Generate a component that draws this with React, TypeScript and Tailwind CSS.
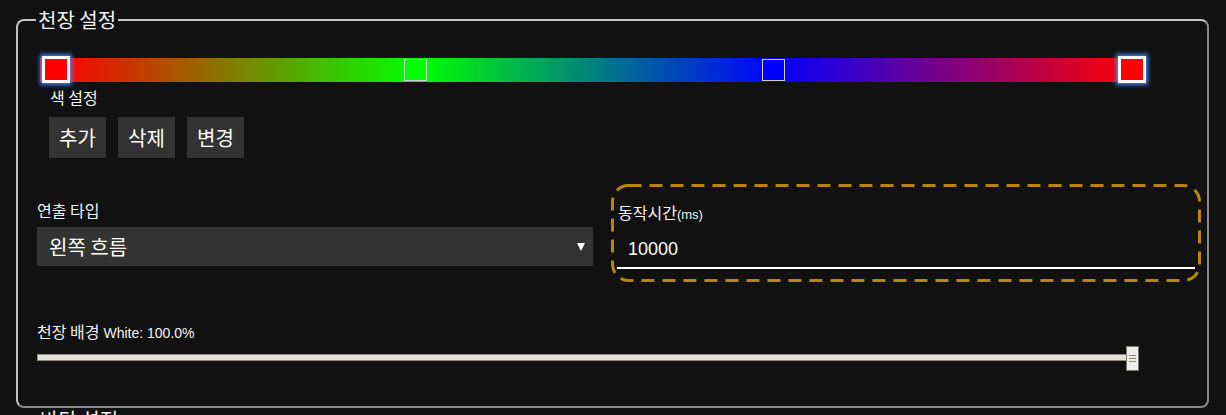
import React from "react";

const gradient =
	"linear-gradient(to right, #ff0000 1.4%, #00ff00 34%, #0000ff 66.3%, #ff0000 98.7%)";

function ColorBar() {
	return (
		<div className="relative ml-[4px] mt-[25px] h-[27px] w-[1106px] pt-[2px]">
			<div className="h-[24px] w-full" style={{ background: gradient }} />
			{/* stop handles */}
			<div className="absolute left-[2px] top-0 h-[27px] w-[28px] border-[3px] border-white bg-[#ff0000] shadow-[0_0_4px_2px_rgba(70,140,255,0.9)]" />
			<div className="absolute left-[364px] top-[3px] h-[22px] w-[23px] border-[1.5px] border-[#d0d0d0] bg-[#00ff00]" />
			<div className="absolute left-[722px] top-[3px] h-[22px] w-[23px] border-[1.5px] border-[#d0d0d0] bg-[#0000ff]" />
			<div className="absolute right-0 top-0 h-[27px] w-[28px] border-[3px] border-white bg-[#ff0000] shadow-[0_0_4px_2px_rgba(70,140,255,0.9)]" />
		</div>
	);
}

function Slider() {
	return (
		<div className="relative ml-[1px] mt-[5px] h-[25px] w-[1102px] pt-[8px]">
			<div className="h-[7px] w-[1096px] border border-[#8c8880] bg-[#e6e2da]" />
			<div className="absolute right-0 top-0 flex h-[25px] w-[13px] flex-col items-center justify-center gap-[2px] border border-[#7a7670] bg-[#efede8]">
				<span className="h-px w-[7px] bg-[#8a8680]" />
				<span className="h-px w-[7px] bg-[#8a8680]" />
				<span className="h-px w-[7px] bg-[#8a8680]" />
			</div>
		</div>
	);
}

export default function App() {
	return (
		<div className="h-[415px] overflow-hidden bg-[#111111] pl-4 pr-[17px] pt-[9px] font-['Noto_Sans_CJK_KR','Noto_Sans',sans-serif] text-[#f2f2f2]">
			<fieldset className="rounded-lg border-2 border-[#c2c2c2] border-b-[#8a8a8a] border-r-[#8a8a8a] pb-[35px] pl-[18px] pr-[4px]">
				<legend className="px-[2px] text-[20px] leading-[22px]">천장 설정</legend>

				<ColorBar />

				<div className="ml-[14px] mt-[4px] h-[20px] text-[16px] leading-[20px]">색 설정</div>
				<div className="ml-[13px] mt-[10px] flex gap-[12px]">
					{["추가", "삭제", "변경"].map((label) => (
						<button
							key={label}
							className="flex h-[41px] w-[57px] items-center justify-center bg-[#333333] text-[20px] leading-none text-white"
						>
							{label}
						</button>
					))}
				</div>

				<div className="mt-[26px] flex items-start">
					<div className="ml-[1px] flex flex-col">
						<div className="mt-[16px] h-[20px] text-[16px] leading-[20px]">연출 타입</div>
						<div className="mt-[7px] flex h-[39px] w-[556px] items-center justify-between bg-[#333333] pl-[12px] pr-[8px]">
							<span className="text-[20px] leading-none text-white">왼쪽 흐름</span>
							<span className="h-0 w-0 border-x-[4px] border-t-[8px] border-x-transparent border-t-white" />
						</div>
					</div>

					<div className="relative ml-[18px] h-[98px] w-[590px] px-[6px] pt-[18px]">
						<svg className="absolute inset-0" width="590" height="98">
							<rect
								x="1.5"
								y="1.5"
								width="587"
								height="95"
								rx="16"
								fill="none"
								stroke="#b8860b"
								strokeWidth="3"
								strokeDasharray="13 8"
							/>
						</svg>
						<div className="ml-[1px] flex h-[20px] items-baseline text-[16px] leading-[20px]">
							동작시간<span className="font-['Liberation_Sans',Arial,sans-serif] text-[13px] leading-[20px]">(ms)</span>
						</div>
						<div className="mt-[14px] flex h-[33px] items-start border-b-2 border-white pl-[11px] pt-[1px]">
							<span className="font-['Liberation_Sans',Arial,sans-serif] text-[18px] leading-[24px] text-white">
								10000
							</span>
						</div>
					</div>
				</div>

				<div className="ml-[1px] mt-[39px] flex h-[20px] items-baseline gap-[4px] text-[16px] leading-[20px]">
					<span>천장 배경</span>
					<span className="font-['Liberation_Sans',Arial,sans-serif] text-[14px] leading-[20px]">White: 100.0%</span>
				</div>
				<Slider />
			</fieldset>

			<fieldset className="mt-[1px] rounded-lg border-2 border-[#c2c2c2] pl-[20px]">
				<legend className="px-[2px] text-[20px] leading-[22px]">바닥 설정</legend>
				<div className="h-[40px]" />
			</fieldset>
		</div>
	);
}
